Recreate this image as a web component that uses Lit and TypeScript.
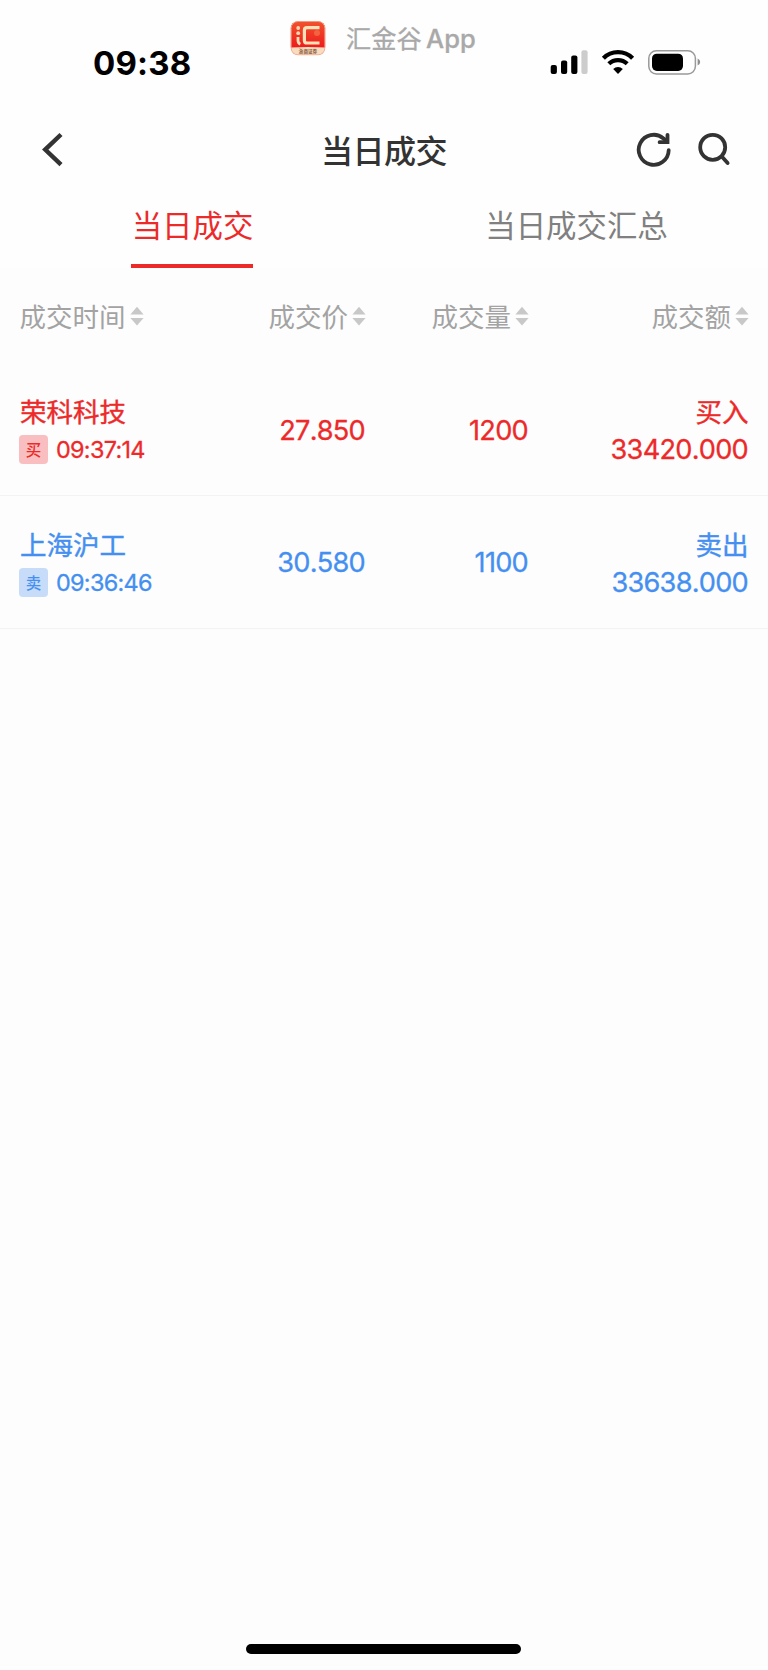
import { LitElement, html, css, svg } from "lit";
import { customElement, property } from "lit/decorators.js";
import { classMap } from "lit/directives/class-map.js";

interface Trade {
  name: string;
  side: "buy" | "sell";
  time: string;
  price: string;
  volume: string;
  amount: string;
}

const TRADES: Trade[] = [
  { name: "荣科科技", side: "buy", time: "09:37:14", price: "27.850", volume: "1200", amount: "33420.000" },
  { name: "上海沪工", side: "sell", time: "09:36:46", price: "30.580", volume: "1100", amount: "33638.000" },
];

const COLUMNS = ["成交时间", "成交价", "成交量", "成交额"];

@customElement("status-bar")
class StatusBar extends LitElement {
  static styles = css`
    :host {
      display: grid;
      grid-template-columns: 283px 1fr 283px;
      height: 112px;
      box-sizing: border-box;
    }
    svg { display: block; }
    .time {
      padding: 43px 0 0 93px;
      font: 700 33px/40px Inter, sans-serif;
      letter-spacing: 0.2px;
      color: #000;
    }
    .source {
      display: flex;
      align-items: flex-start;
      padding: 20px 0 0 7px;
    }
    .logo { flex: none; }
    .source-name {
      margin: -1px 0 0 20px;
      white-space: nowrap;
      font: 400 25.2px/37px "Noto Sans CJK SC", sans-serif;
      -webkit-text-stroke: 0.3px currentColor;
      color: #a9a9a9;
    }
    .latin {
      margin-left: 4.5px;
      font: 500 25.5px/37px Inter, sans-serif;
    }
    .indicators {
      display: flex;
      align-items: flex-start;
      padding: 49px 0 0 63px;
      gap: 13px;
    }
  `;

  render() {
    return html`
      <div class="time">09:38</div>
      <div class="source">
        <svg class="logo" width="36" height="36" viewBox="0 0 36 36">
          <defs>
            <linearGradient id="red" x1="0" y1="0" x2="0" y2="1">
              <stop offset="0" stop-color="#f0552f" />
              <stop offset="1" stop-color="#ee1c1c" />
            </linearGradient>
            <clipPath id="tile"><rect x="0.8" y="1.2" width="34.4" height="34" rx="7" /></clipPath>
          </defs>
          <g clip-path="url(#tile)">
            <rect width="36" height="36" fill="#f7dcc0" />
            <path d="M0 0H36V27.6Q18 26.4 0 27.6Z" fill="url(#red)" />
            <rect x="1.1" y="1.5" width="33.8" height="33.4" rx="6.7" fill="none" stroke="#f4a58d" stroke-width="1" />
            <circle cx="27" cy="13" r="3" fill="#f5623f" />
            <circle cx="8.2" cy="8" r="1.9" fill="#fbd9b0" />
            <circle cx="8.2" cy="13.2" r="1.9" fill="#fbd9b0" />
            <path d="M8 17V20.5Q8 23 10.3 24.2" fill="none" stroke="#fbe0b8" stroke-width="2.8" />
            <path d="M29.5 7.6H17Q14.4 7.6 14.4 10.2V20.4Q14.4 23 17 23H29.5" fill="none" stroke="#fbe0b8" stroke-width="3.2" />
          </g>
          <text x="18" y="33" text-anchor="middle" font-family="Noto Sans CJK SC, sans-serif" font-size="4.6" font-weight="700" fill="#8a5a3c">浙商证券</text>
        </svg>
        <span class="source-name">汇金谷<span class="latin">App</span></span>
      </div>
      <div class="indicators">
        <svg width="40" height="26" viewBox="0 0 40 26">
          <rect x="2.7" y="16" width="6.2" height="9" rx="2" />
          <rect x="13" y="11.4" width="6.2" height="13.6" rx="2" />
          <rect x="23.2" y="6.4" width="6.2" height="18.6" rx="2" />
          <rect x="33.4" y="1.3" width="6.2" height="23.7" rx="2" fill="#ccc" />
        </svg>
        <svg class="wifi" width="34" height="26" viewBox="0 0 34 26">
          <path d="M2.4 9.2A20.6 20.6 0 0 1 31.6 9.2" fill="none" stroke="#000" stroke-width="4.3" />
          <path d="M7.8 14.8A13.2 13.2 0 0 1 26.2 14.8" fill="none" stroke="#000" stroke-width="4.2" />
          <path d="M12.2 20A6.7 6.7 0 0 1 21.8 20L17 24.9Z" />
        </svg>
        <svg width="54" height="26" viewBox="0 0 54 26">
          <rect x="0.8" y="1.7" width="46.6" height="23.2" rx="7.6" fill="none" stroke="#999" stroke-width="1.5" />
          <rect x="4" y="4.7" width="31" height="17.2" rx="4.8" />
          <path d="M49.6 9.6Q52.2 10.6 52.2 13.1T49.6 16.6Z" fill="#8e8e8e" />
        </svg>
      </div>
    `;
  }
}

@customElement("nav-bar")
class NavBar extends LitElement {
  static styles = css`
    :host {
      display: grid;
      grid-template-columns: 1fr auto 1fr;
      align-items: center;
      height: 76px;
    }
    svg { display: block; fill: none; stroke: #333; }
    .back { padding-left: 41px; }
    .title {
      font: 500 32.1px/48px "Noto Sans CJK SC", sans-serif;
      color: #333;
      letter-spacing: -0.6px;
      margin-top: -3px;
    }
    .actions {
      display: flex;
      justify-content: flex-end;
      gap: 25px;
      padding-right: 37px;
    }
  `;

  render() {
    return html`
      <div class="back">
        <svg width="24" height="36" viewBox="0 0 24 36">
          <path d="M20 2.5L4.2 17.6L20 32.6" stroke-width="4.4" />
        </svg>
      </div>
      <div class="title">当日成交</div>
      <div class="actions">
        <svg width="36" height="36" viewBox="0 0 36 36" stroke-width="3.8" stroke-linecap="round" stroke-linejoin="miter">
          <path d="M32.7 18.2A15 15 0 1 1 27.2 6.2L31 9.2" />
          <path d="M31.5 2.8V10.2H23.6" />
        </svg>
        <svg width="34" height="36" viewBox="0 0 34 36" stroke-width="3.8" stroke-linecap="round">
          <circle cx="15.7" cy="15.3" r="12.5" />
          <path d="M24.8 24.5L30.6 31" />
        </svg>
      </div>
    `;
  }
}

@customElement("tab-strip")
class TabStrip extends LitElement {
  @property({ attribute: false }) tabs: string[] = [];
  @property({ type: Number }) active = 0;

  static styles = css`
    :host {
      display: grid;
      grid-template-columns: 1fr 1fr;
      height: 80px;
    }
    .tab {
      display: flex;
      justify-content: center;
    }
    .label {
      box-sizing: border-box;
      height: 80px;
      padding: 13px 0 0 1px;
      border-bottom: 4px solid transparent;
      font: 400 30.4px/46px "Noto Sans CJK SC", sans-serif;
      color: #808080;
    }
    .active { color: #ec2a2a; border-color: #ec2a2a; }
  `;

  render() {
    return this.tabs.map(
      (t, i) => html`<div class="tab"><span class=${classMap({ label: true, active: i === this.active })}>${t}</span></div>`
    );
  }
}

@customElement("trade-table")
class TradeTable extends LitElement {
  @property({ attribute: false }) trades: Trade[] = [];

  static styles = css`
    :host { display: block; }
    .row {
      display: grid;
      grid-template-columns: 180px 165px 163px 220px;
      align-items: center;
      padding: 1.5px 20px 0;
      box-sizing: border-box;
      height: 132.7px;
      border-bottom: 1.5px solid #f3f3f3;
    }
    .head {
      height: 95.5px;
      padding-top: 0;
      border-bottom: 0;
      font: 400 26.5px/40px "Noto Sans CJK SC", sans-serif;
      color: #a3a3a3;
    }
    .col {
      display: flex;
      align-items: center;
      justify-content: flex-end;
      gap: 4px;
      margin-right: -1px;
    }
    .col:first-child { justify-content: flex-start; margin-left: -0.5px; }
    .sort { display: block; fill: #c8c8c8; }
    .buy { color: #ec2a2a; --tag: #f9bfc0; }
    .sell { color: #448ff0; --tag: #c6dcf8; }
    .cjk {
      font: 400 26.5px/38px "Noto Sans CJK SC", sans-serif;
      -webkit-text-stroke: 0.4px currentColor;
    }
    .num {
      font: 400 27.2px/37px Inter, sans-serif;
      font-kerning: none;
      letter-spacing: -0.75px;
      text-align: right;
      -webkit-text-stroke: 0.3px currentColor;
    }
    .right { text-align: right; }
    .right .cjk { margin-right: -0.5px; }
    .meta { display: flex; align-items: center; gap: 8px; height: 37px; padding-top: 1px; }
    .tag {
      width: 29px;
      height: 29px;
      margin-left: -1px;
      border-radius: 4px;
      background: var(--tag);
      font: 500 15.5px/28px "Noto Sans CJK SC", sans-serif;
      text-align: center;
    }
    .clock {
      font: 400 23.4px/34px Inter, sans-serif;
      font-feature-settings: "calt" 0;
      letter-spacing: -0.7px;
      margin-top: 1.5px;
      -webkit-text-stroke: 0.3px currentColor;
    }
    .right .num { padding-top: 1px; }
  `;

  render() {
    return html`
      <div class="row head">
        ${COLUMNS.map(
          (c) => html`<div class="col"><span>${c}</span>
            <svg class="sort" width="14" height="20" viewBox="0 0 14 20">
              ${svg`<path d="M7 0.8L13.6 8.4H0.4Z" /><path d="M7 19.6L13.6 12H0.4Z" />`}
            </svg></div>`
        )}
      </div>
      ${this.trades.map(
        (t) => html`
          <div class="row ${t.side}">
            <div>
              <div class="cjk">${t.name}</div>
              <div class="meta">
                <span class="tag">${t.side === "buy" ? "买" : "卖"}</span>
                <span class="clock">${t.time}</span>
              </div>
            </div>
            <div class="num">${t.price}</div>
            <div class="num">${t.volume}</div>
            <div class="right">
              <div class="cjk">${t.side === "buy" ? "买入" : "卖出"}</div>
              <div class="num">${t.amount}</div>
            </div>
          </div>
        `
      )}
    `;
  }
}

@customElement("app-root")
class AppRoot extends LitElement {
  static styles = css`
    :host {
      display: flex;
      flex-direction: column;
      width: 768px;
      height: 1670px;
      background: #fefefe;
      overflow: hidden;
    }
    .content {
      flex: 1;
      background: #fdfdfd;
    }
    .footer {
      display: flex;
      justify-content: center;
      height: 26px;
      background: #fdfdfd;
    }
    .home {
      width: 275px;
      height: 10px;
      margin-right: 1px;
      border-radius: 5px;
      background: #000;
    }
  `;

  render() {
    return html`
      <status-bar></status-bar>
      <nav-bar></nav-bar>
      <tab-strip .tabs=${["当日成交", "当日成交汇总"]} .active=${0}></tab-strip>
      <div class="content"><trade-table .trades=${TRADES}></trade-table></div>
      <div class="footer"><div class="home"></div></div>
    `;
  }
}
